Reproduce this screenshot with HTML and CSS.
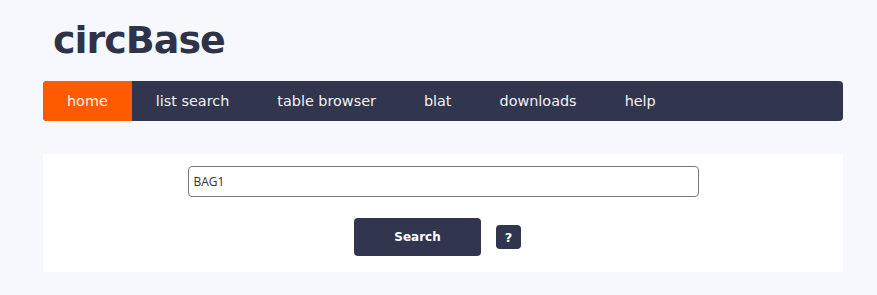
FILE: index.html
```html
<!DOCTYPE html>
<html lang="en">
<head>
    <meta charset="UTF-8">
    <title>circBase</title>
    <link rel="stylesheet" href="styles.css">
</head>
<body>
    <div class="page">
        <h1 class="logo">circBase</h1>

        <nav class="menu">
            <a class="menu-item active" href="#">home</a>
            <a class="menu-item" href="#">list search</a>
            <a class="menu-item" href="#">table browser</a>
            <a class="menu-item" href="#">blat</a>
            <a class="menu-item" href="#">downloads</a>
            <a class="menu-item" href="#">help</a>
        </nav>

        <div class="search-panel">
            <input class="search-input" type="text" value="BAG1">
            <div class="search-actions">
                <button class="search-btn">Search</button>
                <button class="help-btn">?</button>
            </div>
        </div>
    </div>
</body>
</html>
```

FILE: styles.css
```css
* {
    box-sizing: border-box;
    margin: 0;
    padding: 0;
}

body {
    background-color: #f7f8fd;
    font-family: 'DejaVu Sans', sans-serif;
    color: #2f3349;
}

.page {
    padding: 0 34px 0 43px;
}

.logo {
    font-size: 38px;
    font-weight: bold;
    color: #2f3349;
    padding: 15px 0 0 10px;
    height: 81px;
    line-height: 50px;
    letter-spacing: -1px;
}

.menu {
    display: flex;
    height: 40px;
    background-color: #31354e;
    border-radius: 4px;
    overflow: hidden;
}

.menu-item {
    display: flex;
    align-items: center;
    padding: 0 24px;
    color: #f2f2f5;
    text-decoration: none;
    font-size: 14.4px;
}

.menu-item.active {
    background-color: #ff5a00;
    color: #fff5e6;
}

.search-panel {
    margin-top: 33px;
    background-color: #fff;
    padding: 12px 0 16px;
    display: flex;
    flex-direction: column;
    align-items: center;
}

.search-input {
    width: 511px;
    height: 31px;
    border: 1px solid #7a7a7a;
    border-radius: 4px;
    padding: 0 5px;
    font-family: 'Open Sans', sans-serif;
    font-size: 12px;
    color: #333;
}

.search-actions {
    display: flex;
    align-items: center;
    gap: 15px;
    margin-top: 21px;
    padding-right: 11px;
}

.search-btn {
    width: 127px;
    height: 38px;
    border: none;
    border-radius: 4px;
    background-color: #31354e;
    color: #fff;
    font-family: 'DejaVu Sans', sans-serif;
    font-weight: bold;
    font-size: 12px;
}

.help-btn {
    width: 25px;
    height: 24px;
    border: none;
    border-radius: 4px;
    background-color: #31354e;
    color: #fff;
    font-family: 'DejaVu Sans', sans-serif;
    font-weight: bold;
    font-size: 13px;
}
```
